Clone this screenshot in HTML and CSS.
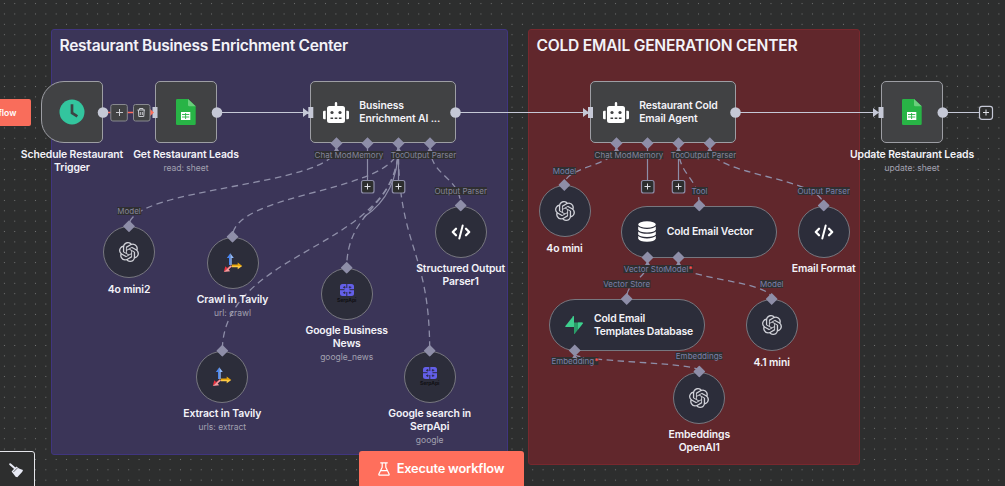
FILE: index.html
```html
<!DOCTYPE html>
<html lang="en">
<head>
<meta charset="utf-8">
<title>Workflow canvas</title>
<link rel="stylesheet" href="styles.css">
</head>
<body>
<svg class="defs" width="0" height="0" aria-hidden="true">
  <symbol id="openai" viewBox="0 0 24 24"><path fill="#d0d1d8" d="M22.2819 9.8211a5.9847 5.9847 0 0 0-.5157-4.9108 6.0462 6.0462 0 0 0-6.5098-2.9A6.0651 6.0651 0 0 0 4.9807 4.1818a5.9847 5.9847 0 0 0-3.9977 2.9 6.0462 6.0462 0 0 0 .7427 7.0966 5.98 5.98 0 0 0 .511 4.9107 6.051 6.051 0 0 0 6.5146 2.9001A5.9847 5.9847 0 0 0 13.2599 24a6.0557 6.0557 0 0 0 5.7718-4.2058 5.9894 5.9894 0 0 0 3.9977-2.9001 6.0557 6.0557 0 0 0-.7475-7.0729zm-9.022 12.6081a4.4755 4.4755 0 0 1-2.8764-1.0408l.1419-.0804 4.7783-2.7582a.7948.7948 0 0 0 .3927-.6813v-6.7369l2.02 1.1686a.071.071 0 0 1 .038.052v5.5826a4.504 4.504 0 0 1-4.4945 4.4944zm-9.6607-4.1254a4.4708 4.4708 0 0 1-.5346-3.0137l.142.0852 4.783 2.7582a.7712.7712 0 0 0 .7806 0l5.8428-3.3685v2.3324a.0804.0804 0 0 1-.0332.0615L9.74 19.9502a4.4992 4.4992 0 0 1-6.1408-1.6464zM2.3408 7.8956a4.485 4.485 0 0 1 2.3655-1.9728V11.6a.7664.7664 0 0 0 .3879.6765l5.8144 3.3543-2.0201 1.1685a.0757.0757 0 0 1-.071 0l-4.8303-2.7865A4.504 4.504 0 0 1 2.3408 7.872zm16.5963 3.8558L13.1038 8.364 15.1192 7.2a.0757.0757 0 0 1 .071 0l4.8303 2.7913a4.4944 4.4944 0 0 1-.6765 8.1042v-5.6772a.79.79 0 0 0-.407-.667zm2.0107-3.0231l-.142-.0852-4.7735-2.7818a.7759.7759 0 0 0-.7854 0L9.409 9.2297V6.8974a.0662.0662 0 0 1 .0284-.0615l4.8303-2.7866a4.4992 4.4992 0 0 1 6.6802 4.66zM8.3065 12.863l-2.02-1.1638a.0804.0804 0 0 1-.038-.0567V6.0742a4.4992 4.4992 0 0 1 7.3757-3.4537l-.142.0805L8.704 5.459a.7948.7948 0 0 0-.3927.6813zm1.0976-2.3654l2.602-1.4998 2.6069 1.4998v2.9994l-2.5974 1.4997-2.6067-1.4997Z"/></symbol>
  <symbol id="sheets" viewBox="0 0 20 26"><path fill="#28b446" d="M1.3 0H12l7.7 7.2v17.5q0 1.3-1.3 1.3H1.3Q0 26 0 24.700V1.300Q0 0 1.300 0z"/><path fill="#6ace7c" d="M12 0l7.700 7.200H13.300Q12 7.200 12 6z"/><path fill="#fff" d="M5 13h9.300v8H5z"/><path stroke="#28b446" stroke-width=".9" d="M6 15.500h7.300M6 18h7.300M9.600 14v6"/></symbol>
  <symbol id="robot" viewBox="0 0 26 21"><path fill="#fff" d="M11.800 1.200a1.200 1.200 0 0 1 2.400 0V4h5.300q2.500 0 2.500 2.500v12q0 2.500-2.500 2.500h-13Q4 21 4 18.500v-12Q4 4 6.500 4h5.300zM0 10q0-1.300 1.300-1.300H2.700v8.600H1.300Q0 17.300 0 16zM26 10q0-1.300-1.300-1.300h-1.400v8.600h1.400q1.300 0 1.300-1.300z"/><g fill="#414244"><circle cx="9" cy="10.500" r="1.600"/><circle cx="17" cy="10.500" r="1.600"/><path d="M7.500 15.500h2.600v1.400H7.500zM11.700 15.500h2.600v1.400h-2.600zM15.900 15.500h2.600v1.400h-2.600z"/></g></symbol>
  <symbol id="code" viewBox="0 0 20 16"><path fill="none" stroke="#fff" stroke-width="2.300" stroke-linecap="round" stroke-linejoin="round" d="M5 4.800L1.800 8 5 11.200M15 4.800L18.200 8 15 11.200"/><path fill="none" stroke="#fff" stroke-width="2" stroke-linecap="round" d="M11.700 1.400L8.300 14.600"/></symbol>
  <symbol id="tavily" viewBox="0 0 20 20"><path fill="#4a86f0" d="M6 12V5H3.800L7.300.3V12z"/><path fill="#8fb9fb" d="M7.300.3L10.800 5H8.700v7H7.300z"/><path fill="#e9a70d" d="M8.700 11.600h6V9.500L19.300 13H8.700z"/><path fill="#fdcb45" d="M8.700 13h10.600l-4.600 3.300V14.300h-6z"/><path fill="#f0303c" d="M7.800 12.200l-3.700 2.700-1.800-1.700L.8 19z"/><path fill="#fb9a9e" d="M7.800 12.200l1.100 1.300-3.300 3L7.200 18.200.8 19z"/></symbol>
  <symbol id="serp" viewBox="0 0 14 12"><path fill="#635fe8" d="M2.500 0h9Q14 0 14 2.500v7Q14 12 11.500 12h-9Q0 12 0 9.500v-7Q0 0 2.500 0z"/><path stroke="#2d2c48" stroke-width="1" fill="none" d="M6.800 0v4M6.800 8v4M0 5.700h4.500M9.500 5.700h4.500M3 3.300h2.500M8.800 3.300h2.500M3 8.700h2.500M8.800 8.700h2.500M4.600 2.200v2.200M9.800 2.200v2.200M4.600 7.600v2.200M9.800 7.600v2.200"/></symbol>
  <symbol id="diamond" viewBox="-6 -6 12 12"><path fill="#8e8ea8" d="M0-6L6 0 0 6-6 0z"/></symbol>
</svg>
<main class="canvas">
  <section class="sticky purple"><h2>Restaurant Business Enrichment Center</h2></section>
  <section class="sticky red"><h2>COLD EMAIL GENERATION CENTER</h2></section>

  <svg class="layer" width="1005" height="486" viewBox="0 0 1005 486">
    <g class="main-edge"><path d="M217 112.500H305M456 112.500H586M736 112.500H876M943 112.500H979"/></g>
    <path class="hot-edge" d="M103 112.500H152"/>
    <g class="sub-edge">
      <path d="M336.500 147C336.500 186.500 129 186.500 129 226"/>
      <path d="M398.300 147C398.300 192 232.500 192 232.500 237"/>
      <path d="M398.300 147C398.300 249 222.300 249 222.300 351"/>
      <path d="M398.300 147C398.300 207.500 346.700 207.500 346.700 268"/>
      <path d="M398.300 147C398.300 249 429.700 249 429.700 351"/>
      <path d="M430 147C430 176.500 460.700 176.500 460.700 206"/>
      <path d="M616.300 147C616.300 166 564.300 166 564.300 185"/>
      <path d="M678.300 147C678.300 176.500 699.300 176.500 699.300 206"/>
      <path d="M709.700 147C709.700 176.500 823.700 176.500 823.700 206"/>
      <path d="M647.300 262C647.300 280 626.600 280 626.600 299"/>
      <path d="M678.300 262C678.300 280 771.700 280 771.700 299"/>
      <path d="M574.700 354C574.700 362 699.300 362 699.300 371"/>
    </g>
    <path class="stub" d="M367.500 147V180M398.500 147V180M647.500 147V180M678.500 147V180M398.300 147C398.300 180 385 203 364 217"/>
  </svg>

  <span class="tag" style="left:336.300px;top:154.500px">Chat Model</span>
  <span class="tag" style="left:367.600px;top:154.500px">Memory</span>
  <span class="tag" style="left:398.800px;top:154.500px">Tool</span>
  <span class="tag" style="left:430px;top:154.500px">Output Parser</span>
  <span class="tag" style="left:129px;top:211.300px">Model</span>
  <span class="tag" style="left:460.700px;top:190.500px">Output Parser</span>
  <span class="tag" style="left:616.300px;top:154.500px">Chat Model</span>
  <span class="tag" style="left:647.600px;top:154.500px">Memory</span>
  <span class="tag" style="left:678.800px;top:154.500px">Tool</span>
  <span class="tag" style="left:710px;top:154.500px">Output Parser</span>
  <span class="tag blue" style="left:564.500px;top:170.500px">Model</span>
  <span class="tag blue" style="left:699.500px;top:190.500px">Tool</span>
  <span class="tag blue" style="left:823.700px;top:190.500px">Output Parser</span>
  <span class="tag blue" style="left:647.300px;top:268.500px">Vector Store</span>
  <span class="tag blue" style="left:678.800px;top:268.500px">Model<b>*</b></span>
  <span class="tag blue" style="left:626.700px;top:284.300px">Vector Store</span>
  <span class="tag blue" style="left:771.800px;top:284.300px">Model</span>
  <span class="tag blue" style="left:575px;top:361.300px">Embedding<b>*</b></span>
  <span class="tag blue" style="left:699.300px;top:356.300px">Embeddings</span>

  <div class="run-side"><span>flow</span></div>

  <article class="node box trigger n-schedule">
    <svg width="26" height="26" viewBox="0 0 26 26"><circle cx="13" cy="13" r="12.500" fill="#33c59e"/><path d="M13 6.500V14l4.200 2.600" fill="none" stroke="#3c4344" stroke-width="2.700" stroke-linecap="square"/></svg>
    <div class="caption">Schedule Restaurant<br>Trigger</div>
  </article>
  <article class="node box n-get"><svg width="20" height="26"><use href="#sheets"/></svg><div class="caption">Get Restaurant Leads<small>read: sheet</small></div></article>
  <article class="node box wide n-agent1"><svg width="26" height="21"><use href="#robot"/></svg><div class="name">Business<br>Enrichment AI ...</div></article>
  <article class="node box wide n-agent2"><svg width="26" height="21"><use href="#robot"/></svg><div class="name">Restaurant Cold<br>Email Agent</div></article>
  <article class="node box n-update"><svg width="20" height="26"><use href="#sheets"/></svg><div class="caption">Update Restaurant Leads<small>update: sheet</small></div></article>

  <article class="node round n-mini2"><svg width="20" height="20"><use href="#openai"/></svg><div class="caption">4o mini2</div></article>
  <article class="node round n-crawl"><svg width="20" height="20"><use href="#tavily"/></svg><div class="caption">Crawl in Tavily<small>url: crawl</small></div></article>
  <article class="node round n-news"><div class="serp"><svg width="14" height="12"><use href="#serp"/></svg><span>SerpApi</span></div><div class="caption">Google Business<br>News<small>google_news</small></div></article>
  <article class="node round n-extract"><svg width="20" height="20"><use href="#tavily"/></svg><div class="caption">Extract in Tavily<small>urls: extract</small></div></article>
  <article class="node round n-search"><div class="serp"><svg width="14" height="12"><use href="#serp"/></svg><span>SerpApi</span></div><div class="caption">Google search in<br>SerpApi<small>google</small></div></article>
  <article class="node round n-parser"><svg width="20" height="16"><use href="#code"/></svg><div class="caption">Structured Output<br>Parser1</div></article>
  <article class="node round n-mini"><svg width="20" height="20"><use href="#openai"/></svg><div class="caption">4o mini</div></article>
  <article class="node pill n-vector">
    <svg width="18" height="21" viewBox="0 0 18 21"><g fill="#fff"><ellipse cx="9" cy="3.500" rx="8.800" ry="3.300"/><path d="M.2 5.600Q3 8 9 8t8.800-2.400v3.200Q16.500 11.400 9 11.400T.2 8.800z"/><path d="M.2 10.400Q3 12.700 9 12.700t8.800-2.300v3.200Q16.500 16 9 16T.2 13.600z"/><path d="M.2 15.100Q3 17.400 9 17.400t8.800-2.300v2.700Q16.500 20.800 9 20.800T.2 17.800z"/></g></svg>
    <div class="name">Cold Email Vector</div>
  </article>
  <article class="node round n-format"><svg width="20" height="16"><use href="#code"/></svg><div class="caption">Email Format</div></article>
  <article class="node pill n-db">
    <svg width="18" height="18" viewBox="0 0 18 18"><path fill="#3ecf8e" d="M9 .3V11H.8Q-.3 11 .4 9.900L8.200.3Q9-.4 9 .3z"/><path fill="#2a9d68" d="M9 17.700V6.600h8.300q1 0 .3 1.100L9.800 17.700Q9 18.400 9 17.700z"/><path fill="#3ecf8e" d="M13 6.600h4.300q1 0 .3 1.100L13 13.500z"/></svg>
    <div class="name">Cold Email<br>Templates Database</div>
  </article>
  <article class="node round n-mini41"><svg width="20" height="20"><use href="#openai"/></svg><div class="caption">4.1 mini</div></article>
  <article class="node round n-embed"><svg width="20" height="20"><use href="#openai"/></svg><div class="caption">Embeddings<br>OpenAI1</div></article>

  <svg class="layer" width="1005" height="486" viewBox="0 0 1005 486">
    <g fill="#c5c8d6">
      <circle cx="103" cy="112.500" r="5.300"/><circle cx="217" cy="112.500" r="5.300"/><circle cx="455.500" cy="112.500" r="5.300"/><circle cx="735.500" cy="112.500" r="5.300"/><circle cx="942.800" cy="112.500" r="5.300"/>
      <path d="M152.500 107h5v11h-5zM308.300 107h5v11h-5zM588 107h5v11h-5zM878.500 107h5v11h-5zM303 108l6 4.500-6 4.500zM583 108l6 4.500-6 4.500zM873 108l6 4.500-6 4.500z"/>
    </g>
    <path fill="#ff6d5a" d="M149.500 108.500l4.500 4-4.500 4z"/>
    <g class="ports">
      <path d="M336.500 137.200l6 6-6 6-6-6zM367.500 137.200l6 6-6 6-6-6zM398.500 137.200l6 6-6 6-6-6zM430 137.200l6 6-6 6-6-6z"/>
      <path d="M616.500 137.200l6 6-6 6-6-6zM647.500 137.200l6 6-6 6-6-6zM678.500 137.200l6 6-6 6-6-6zM709.800 137.200l6 6-6 6-6-6z"/>
      <path d="M647.500 251.400l6 6-6 6-6-6zM678.500 251.400l6 6-6 6-6-6zM574.700 344.600l6 6-6 6-6-6z"/>
      <path d="M336.500 147l2.500 4h-5zM398.500 147l2.500 4h-5zM430 147l2.500 4h-5zM616.500 147l2.500 4h-5zM678.500 147l2.500 4h-5zM709.800 147l2.500 4h-5zM647.500 261l2.500 4h-5zM678.500 261l2.500 4h-5zM574.700 354l2.500 4h-5z"/>
    </g>
    <g>
      <use href="#diamond" x="123" y="220.300" width="12" height="12"/><use href="#diamond" x="226.500" y="230.700" width="12" height="12"/><use href="#diamond" x="340.700" y="261.800" width="12" height="12"/><use href="#diamond" x="216.300" y="344.700" width="12" height="12"/><use href="#diamond" x="423.700" y="344.700" width="12" height="12"/><use href="#diamond" x="454.700" y="199.500" width="12" height="12"/>
      <use href="#diamond" x="558.300" y="179" width="12" height="12"/><use href="#diamond" x="693.300" y="199.500" width="12" height="12"/><use href="#diamond" x="817.700" y="199.500" width="12" height="12"/><use href="#diamond" x="620.700" y="293" width="12" height="12"/><use href="#diamond" x="765.700" y="293" width="12" height="12"/><use href="#diamond" x="693.300" y="365.500" width="12" height="12"/>
    </g>
    <g class="plus">
      <rect x="361.500" y="180.500" width="12.500" height="12.500" rx="2"/><path d="M364.500 186.500h6M367.500 183.500v6"/>
      <rect x="392.300" y="180.500" width="12.500" height="12.500" rx="2"/><path d="M395.500 186.500h6M398.500 183.500v6"/>
      <rect x="641.500" y="180.500" width="12.500" height="12.500" rx="2"/><path d="M644.500 186.500h6M647.500 183.500v6"/>
      <rect x="672.300" y="180.500" width="12.500" height="12.500" rx="2"/><path d="M675.500 186.500h6M678.500 183.500v6"/>
    </g>
    <g class="plus end"><rect x="979.500" y="106.300" width="13" height="13" rx="2.500"/><path d="M983 112.500h6M986 109.500v6"/></g>
    <g class="tools"><rect x="110.800" y="104.500" width="16.500" height="16.500" rx="2"/><path d="M116 112.500h7M119.500 109v7"/><rect x="133.500" y="104.500" width="16.500" height="16.500" rx="2"/><path d="M137.500 110h7.500M139.500 110v-1.500h3.500v1.500M138.400 110l.4 6.500h5l.4-6.500M140.300 112v3M142.300 112v3"/></g>
  </svg>

  <button class="execute"><svg width="12" height="14" viewBox="0 0 12 14"><path fill="none" stroke="#fff" stroke-width="1.200" stroke-linecap="round" stroke-linejoin="round" d="M2.700.8h6.600M4.200.8v4.500L.9 12q-.4 1.200.8 1.200h8.600q1.200 0 .8-1.200L7.800 5.300V.8M2.800 8.700h6.400"/></svg><span>Execute workflow</span></button>
  <button class="tidy" aria-label="Tidy up"><svg width="15" height="15" viewBox="0 0 15 15"><path d="M1.200 1.200L5.500 5" stroke="#e8eaf5" stroke-width="2" stroke-linecap="round"/><path fill="#e8eaf5" d="M7.300 3.500L10 5.400l4 1.700-.7 1.600-5 5.500-1.700-.4-4-5.400z"/><path d="M8.300 5.100L4.400 9" stroke="#2d2e2e" stroke-width=".7"/></svg></button>
</main>
</body>
</html>
```
FILE: styles.css
```css
* { box-sizing: border-box; }
body { margin: 0; background: #2d2e2e; font-family: Inter, "Liberation Sans", sans-serif; }
.defs { position: absolute; }
.canvas {
  position: relative;
  width: 1005px;
  height: 486px;
  overflow: hidden;
  background-color: #2d2e2e;
  background-image: radial-gradient(circle at center, #747575 0, #666767 .6px, transparent .95px);
  background-size: 10.37px 10.37px;
  background-position: -.8px 8.8px;
}
.layer { position: absolute; left: 0; top: 0; pointer-events: none; }

.sticky { position: absolute; border: 1px solid; border-radius: 3px; padding: 7px 7.500px; }
.sticky h2 { margin: 0; font-size: 15.600px; line-height: 18px; font-weight: 600; color: #f3f3f8; white-space: nowrap; }
.purple { left: 51px; top: 29px; width: 457px; height: 426px; background: #3b3558; border-color: #40357f; }
.purple h2 { letter-spacing: -.3px; }
.red { left: 528px; top: 29px; width: 332px; height: 436px; background: #61272c; border-color: #78282e; }
.red h2 { letter-spacing: -.23px; }

.main-edge path { stroke: #c5c8d6; stroke-width: 1.200; fill: none; }
.hot-edge { stroke: #ff6d5a; stroke-width: 1.300; }
.sub-edge path { stroke: #8e8ea8; stroke-width: 1.300; fill: none; stroke-dasharray: 6.500 4.500; }
.stub { stroke: #8e8ea8; stroke-width: 1.200; fill: none; }
.ports path { fill: #8e8ea8; }

.tag {
  position: absolute;
  transform: translate(-50%, -50%);
  font-size: 8px;
  line-height: 8px;
  white-space: nowrap;
  color: #85859a;
  background: #2f2f31;
}
.tag.blue { color: #7d80a8; }
.tag b { color: #ff4d4d; }

.node { position: absolute; display: flex; align-items: center; justify-content: center; color: #f3f3f8; }
.box { width: 62px; height: 62px; top: 81.300px; border: 1px solid #9d9ea4; border-radius: 5px; background: #414244; }
.trigger { border-radius: 23px 5px 5px 23px; }
.wide { width: 146px; justify-content: flex-start; gap: 10.500px; padding-left: 11.500px; }
.round { width: 52px; height: 52px; border: 1px solid #77777f; border-radius: 50%; background: #2c2d3a; }
.pill { width: 155.500px; height: 52px; border: 1px solid #77777f; border-radius: 26px; background: #2c2d3a; justify-content: flex-start; }
.name { font-size: 10.400px; line-height: 13px; font-weight: 600; letter-spacing: -.13px; white-space: nowrap; }
.caption {
  position: absolute;
  left: 50%;
  top: 100%;
  transform: translateX(-50%);
  margin-top: 5.500px;
  text-align: center;
  white-space: nowrap;
  font-size: 10.400px;
  line-height: 13px;
  font-weight: 600;
  letter-spacing: -.1px;
}
.caption small { display: block; margin-top: 1px; font-size: 8.500px; line-height: 13px; font-weight: 400; letter-spacing: 0; color: #a2a1b0; }

.n-schedule { left: 41px; }
.n-get { left: 155px; }
.n-agent1 { left: 310.300px; }
.n-agent2 { left: 590.200px; }
.n-update { left: 881px; }
.n-mini2 { left: 103px; top: 226.300px; }
.n-crawl { left: 206.500px; top: 236.700px; }
.n-news { left: 320.700px; top: 267.800px; }
.n-extract { left: 196.300px; top: 350.700px; }
.n-search { left: 403.700px; top: 350.700px; }
.n-parser { left: 434.700px; top: 205.700px; }
.n-mini { left: 538.500px; top: 185px; }
.n-vector { left: 621.300px; top: 205.700px; padding-left: 15.500px; gap: 11px; }
.n-format { left: 797.700px; top: 205.700px; }
.n-db { left: 549px; top: 299px; padding-left: 15px; gap: 11px; }
.n-db .name { letter-spacing: -.19px; }
.n-mini41 { left: 745.700px; top: 299px; }
.n-embed { left: 673.300px; top: 371.700px; }

.serp { display: flex; flex-direction: column; align-items: center; gap: 1px; }
.serp span { font-size: 5px; line-height: 6px; font-weight: 700; color: #101014; }

.plus rect { fill: #2d2e2e; stroke: #8e8ea8; stroke-width: 1.200; }
.plus path { stroke: #e0e1e8; stroke-width: 1; }
.plus.end rect { stroke: #c5c8d6; }
.tools rect { fill: #414244; stroke: #88898f; stroke-width: 1; }
.tools path { fill: none; stroke: #c8c9cf; stroke-width: 1; }

.run-side {
  position: absolute;
  left: 0;
  top: 99px;
  width: 31px;
  height: 27px;
  display: flex;
  align-items: center;
  border-radius: 0 2px 2px 0;
  background: #f96d5b;
  color: #fff;
  font-size: 8.600px;
  font-weight: 600;
}
.run-side span { margin-left: -1.500px; }
.execute {
  position: absolute;
  left: 358.500px;
  top: 451px;
  width: 165px;
  height: 38px;
  display: flex;
  align-items: center;
  justify-content: center;
  gap: 7px;
  padding: 0 0 2px;
  border: 0;
  border-radius: 3px;
  background: #ff6f5c;
  color: #fff;
  font: 600 12.800px/16px Inter, sans-serif;
  letter-spacing: -.17px;
}
.tidy {
  position: absolute;
  left: -4px;
  top: 451px;
  width: 39px;
  height: 40px;
  padding: 0 0 2px 12px;
  border: 1px solid #e4e5ea;
  border-radius: 3px;
  background: #2d2e2e;
  text-align: left;
  line-height: 0;
}
```
